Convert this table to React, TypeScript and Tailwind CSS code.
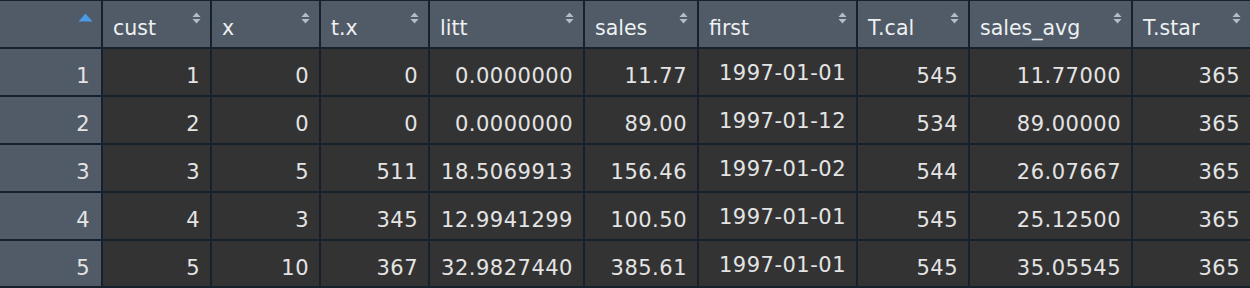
import React from "react";

type Col = {
  name: string;
  width: string;
  date?: boolean;
};

const columns: Col[] = [
  { name: "cust", width: "w-[109px]" },
  { name: "x", width: "w-[109px]" },
  { name: "t.x", width: "w-[109px]" },
  { name: "litt", width: "w-[155px]" },
  { name: "sales", width: "w-[114px]" },
  { name: "first", width: "w-[159px]", date: true },
  { name: "T.cal", width: "w-[112px]" },
  { name: "sales_avg", width: "w-[163px]" },
  { name: "T.star", width: "flex-1" },
];

const rows: string[][] = [
  ["1", "0", "0", "0.0000000", "11.77", "1997-01-01", "545", "11.77000", "365"],
  ["2", "0", "0", "0.0000000", "89.00", "1997-01-12", "534", "89.00000", "365"],
  ["3", "5", "511", "18.5069913", "156.46", "1997-01-02", "544", "26.07667", "365"],
  ["4", "3", "345", "12.9941299", "100.50", "1997-01-01", "545", "25.12500", "365"],
  ["5", "10", "367", "32.9827440", "385.61", "1997-01-01", "545", "35.05545", "365"],
];

const font = { fontFamily: '"DejaVu Sans", "Open Sans", sans-serif' };

function SortIcon() {
  return (
    <svg width="9" height="12" viewBox="0 0 9 12" className="shrink-0">
      <path d="M4.5 0.5 L8.5 5 L0.5 5 Z" fill="#b4bcc6" />
      <path d="M0.5 7 L8.5 7 L4.5 11.5 Z" fill="#b4bcc6" />
    </svg>
  );
}

export default function App() {
  return (
    <div className="w-[1250px] h-[288px] overflow-hidden bg-[#333333] text-[#e4e4e4]" style={font}>
      {/* header */}
      <div className="flex h-[49px] border-t border-b-2 border-[#17212d] bg-[#505b67]">
        <div className="w-[103px] shrink-0 border-r-2 border-[#17212d] flex justify-end pr-[8px] pt-[12px]">
          <svg width="15" height="9" viewBox="0 0 15 9">
            <path d="M7.5 0.5 L14.5 8.5 L0.5 8.5 Z" fill="#4a9ae6" />
          </svg>
        </div>
        {columns.map((c, i) => (
          <div
            key={c.name}
            className={`${c.width} shrink-0 flex justify-between items-start pl-[10px] pr-[9px] ${
              i < columns.length - 1 ? "border-r-2 border-[#17212d]" : ""
            }`}
          >
            <span className="pt-[15px] text-[20.5px] leading-[24px] text-[#eef0f2]">{c.name}</span>
            <div className="mt-[11px]">
              <SortIcon />
            </div>
          </div>
        ))}
      </div>

      {rows.map((r, ri) => (
        <div
          key={ri}
          className={`flex border-b-2 border-[#17212d] ${ri === rows.length - 1 ? "h-[47px]" : "h-[48px]"}`}
        >
          <div className="w-[103px] shrink-0 border-r-2 border-[#17212d] bg-[#505b67] text-right pr-[11px] pt-[15px] text-[21px] leading-[24px] tracking-[0.5px]">
            {ri + 1}
          </div>
          {r.map((v, ci) => {
            const c = columns[ci];
            return (
              <div
                key={ci}
                className={`${c.width} shrink-0 text-right pr-[10px] text-[21px] leading-[24px] tracking-[0.5px] ${
                  c.date ? "pt-[12px]" : "pt-[15px]"
                } ${ci < columns.length - 1 ? "border-r-2 border-[#17212d]" : ""}`}
              >
                {v}
              </div>
            );
          })}
        </div>
      ))}
    </div>
  );
}
